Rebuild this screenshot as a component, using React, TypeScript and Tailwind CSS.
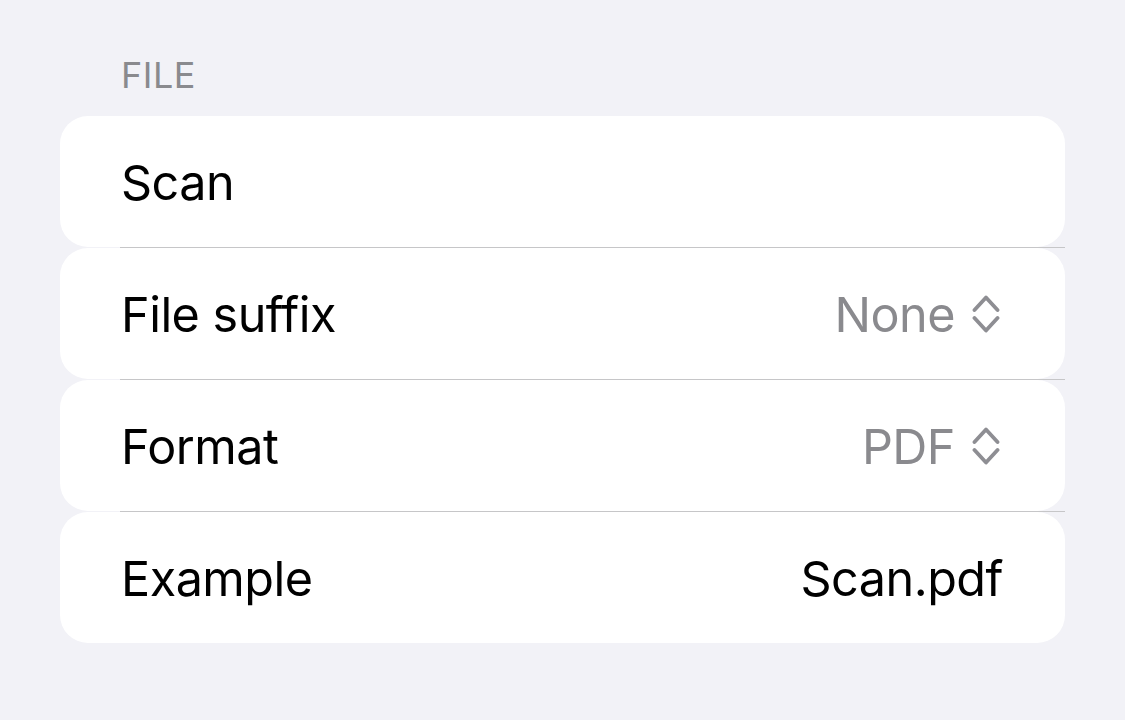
import React from "react";

const Chevrons = () => (
  <svg width="28" height="40" viewBox="0 0 28 40" fill="none" className="shrink-0 mr-[3px]">
    <path d="M2.5 16 L14 3.5 L25.5 16" stroke="#8e8e93" strokeWidth="3.8" strokeLinecap="round" strokeLinejoin="round" />
    <path d="M2.5 24 L14 36.5 L25.5 24" stroke="#8e8e93" strokeWidth="3.8" strokeLinecap="round" strokeLinejoin="round" />
  </svg>
);

type Row = { label: string; value?: string; picker?: boolean; dark?: boolean };

const rows: Row[] = [
  { label: "Scan" },
  { label: "File suffix", value: "None", picker: true },
  { label: "Format", value: "PDF", picker: true },
  { label: "Example", value: "Scan.pdf", dark: true },
];

export default function App() {
  return (
    <div
      className="w-full h-[720px] bg-[#f2f2f7] pt-[55px] px-[60px]"
      style={{ fontFamily: "Inter, 'Liberation Sans', sans-serif" }}
    >
      <div className="pl-[61px] h-[61px] text-[36px] leading-[40px] text-[#8a8a8e] tracking-[0.5px]">FILE</div>
      <div className="flex flex-col">
        {rows.map((r, i) => (
          <React.Fragment key={r.label}>
            <div className="h-[131px] rounded-[28px] bg-white flex items-center pl-[61px] pr-[62px]">
              <span className="text-[48.5px] text-black tracking-[-0.5px] flex-1 pt-[3px]">{r.label}</span>
              {r.value && (
                <div className="flex items-center gap-[17px]">
                  <span
                    className={`text-[48.5px] tracking-[-0.5px] pt-[3px] ${r.dark ? "text-black" : "text-[#8a8a8e]"}`}
                  >
                    {r.value}
                  </span>
                  {r.picker && <Chevrons />}
                </div>
              )}
            </div>
            {i < rows.length - 1 && <div className="h-px ml-[60px] bg-[#c6c6c8]" />}
          </React.Fragment>
        ))}
      </div>
    </div>
  );
}
